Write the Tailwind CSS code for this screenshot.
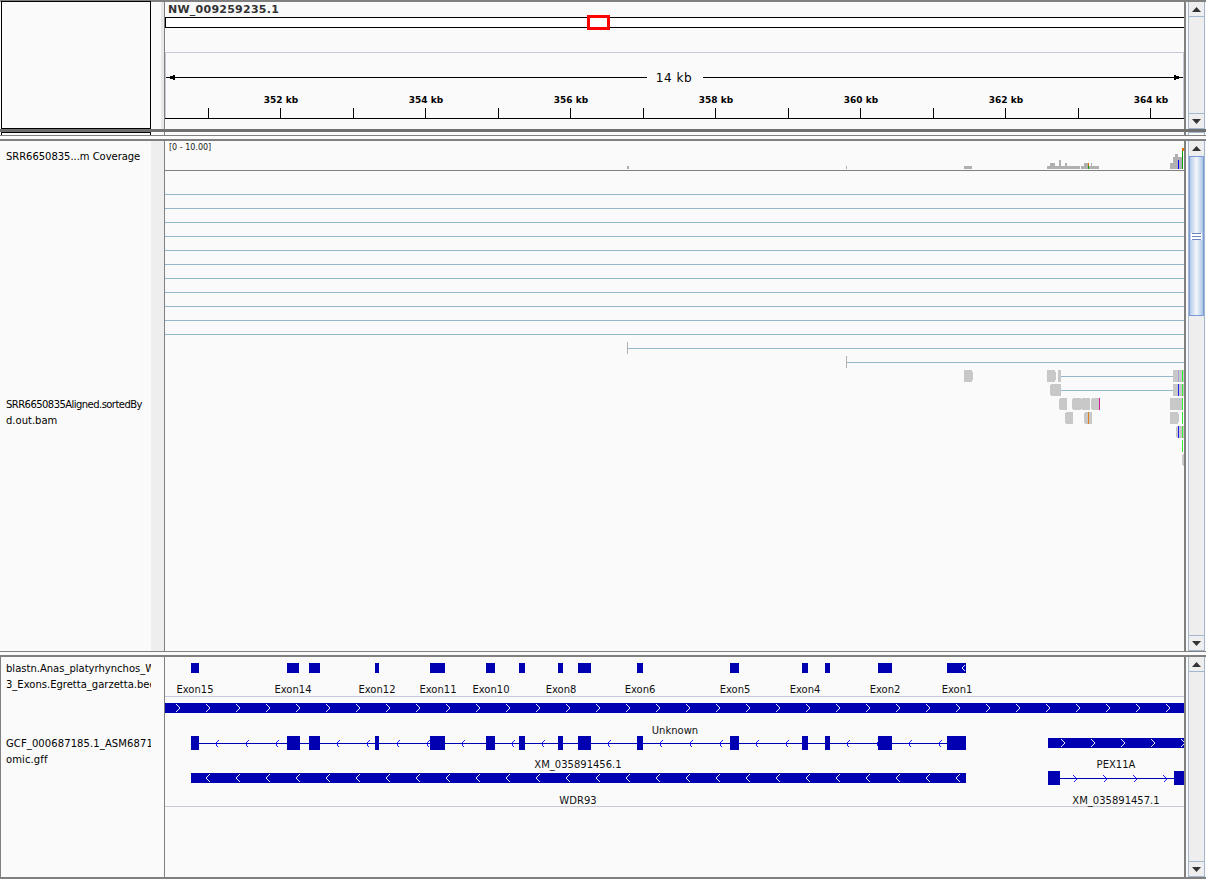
<!DOCTYPE html>
<html lang="en">
<head>
  <meta charset="UTF-8" />
  <title>IGV</title>
  <script src="https://cdn.jsdelivr.net/npm/@tailwindcss/browser@4"></script>
</head>
<body class="bg-[#fafafa] overflow-hidden">
<div class="w-[1206px] h-[879px] flex flex-col bg-[#fafafa] font-['DejaVu_Sans',sans-serif] text-[10px] text-black">

  <!-- header panel -->
  <div class="h-[129px] flex border-t-2 border-[#808080]">
    <div class="w-[151px] pl-px shrink-0"><div class="-mt-px h-[128px] border border-black bg-[#fafafa]"></div></div>
    <div class="w-[10px] shrink-0"></div>
    <div class="w-[3px] shrink-0 bg-[#e8e8e8]"></div>
    <div class="w-[1020px] shrink-0 border-l border-[#808080]">
      <svg width="1019" height="127" viewBox="165 2 1019 127" shape-rendering="crispEdges" class="block">
        <text x="168" y="13" font-size="11" font-weight="700" letter-spacing="0.25" fill="#333">NW_009259235.1</text>
        <rect x="165.5" y="17.5" width="1020" height="10" fill="#fff" stroke="#000"/>
        <rect x="588.500" y="16.500" width="20" height="12" fill="none" stroke="#f00" stroke-width="3"/>
        <rect x="165.500" y="52.500" width="1018" height="66" fill="none" stroke="#c8c8d8"/>
        <path d="M166 77.500H647M703 77.500H1183M208.500 108V118M280.500 108V118M353.500 108V118M425.500 108V118M498.500 108V118M570.500 108V118M643.500 108V118M715.500 108V118M788.500 108V118M860.500 108V118M933.500 108V118M1005.500 108V118M1078.500 108V118M1150.500 108V118" stroke="#000" fill="none"/>
        <path d="M165 118.500H1184" stroke="#000"/>
        <polygon points="168,77.500 175,74.500 175,80.500" fill="#000"/>
        <polygon points="1181,77.500 1174,74.500 1174,80.500" fill="#000"/>
        <text x="674" y="82" text-anchor="middle" font-size="12" letter-spacing="0.6" fill="#000">14 kb</text>
        <g font-size="9" font-weight="700" text-anchor="middle" fill="#000">
          <text x="281" y="103">352 kb</text>
          <text x="426" y="103">354 kb</text>
          <text x="571" y="103">356 kb</text>
          <text x="716" y="103">358 kb</text>
          <text x="861" y="103">360 kb</text>
          <text x="1006" y="103">362 kb</text>
          <text x="1151" y="103">364 kb</text>
        </g>
      </svg>
    </div>
    <div class="w-[22px] shrink-0 border-l-2 border-[#808080] pl-[2px] pr-px">
      <div class="h-full flex flex-col border-x border-[#a3b8cc] bg-[#eeeeee]">
        <div class="h-[15px] flex items-center justify-center border-b border-[#a3b8cc]">
          <svg width="9" height="5" viewBox="0 0 9 5"><polygon points="4.500,0 9,5 0,5" fill="#333"/></svg>
        </div>
        <div class="flex-1"></div>
        <div class="h-[16px] flex items-center justify-center border-y border-[#a3b8cc]">
          <svg width="9" height="5" viewBox="0 0 9 5"><polygon points="0,0 9,0 4.500,5" fill="#333"/></svg>
        </div>
      </div>
    </div>
  </div>

  <!-- divider and the hidden strip -->
  <div class="h-[3px] bg-[#707070]"></div>
  <div class="h-[4px] flex border-b border-[#808080]">
    <div class="w-[151px] pl-px shrink-0"><div class="h-[3px] border-x border-t border-black"></div></div>
    <div class="w-[13px] shrink-0"></div>
    <div class="w-[1020px] shrink-0 border-l border-[#808080]"></div>
    <div class="w-[22px] shrink-0 border-l-2 border-[#808080] pl-[2px] pr-px"><div class="h-[3px] border-x border-t border-[#a3b8cc]"></div></div>
  </div>
  <div class="h-[3px]"></div>

  <!-- alignment panel -->
  <div class="h-[513px] flex border-t-2 border-b border-[#808080]">
    <div class="w-[151px] shrink-0 pl-[6px] leading-[16px] whitespace-nowrap overflow-hidden">
      <div class="mt-[8px] h-[248px] tracking-[-0.04px]">SRR6650835...m Coverage</div>
      <div class="tracking-[-0.55px]">SRR6650835Aligned.sortedBy</div>
      <div>d.out.bam</div>
    </div>
    <div class="w-[13px] shrink-0 bg-[#eeeeee]"></div>
    <div class="w-[1020px] shrink-0 border-l border-[#808080]">
      <svg width="1019" height="510" viewBox="165 141 1019 510" shape-rendering="crispEdges" class="block">
        <text x="169" y="150" font-size="8" fill="#222">[0 - 10.00]</text>
        <path d="M165 170.500H1184" stroke="#808080"/>
        <!-- coverage -->
        <g fill="#b0b0b0">
          <rect x="627" y="166" width="2" height="3"/>
          <rect x="846" y="166" width="1" height="3"/>
          <rect x="964" y="166" width="8" height="3"/>
          <rect x="1047" y="166" width="33" height="3"/>
          <rect x="1050" y="163" width="5" height="3"/>
          <rect x="1059" y="160" width="2" height="6"/>
          <rect x="1065" y="163" width="2" height="3"/>
          <rect x="1081" y="166" width="18" height="3"/>
          <rect x="1084" y="163" width="4" height="3"/>
          <rect x="1091" y="163" width="1" height="3"/>
          <rect x="1170" y="163" width="3" height="6"/>
          <rect x="1173" y="157" width="9" height="12"/>
          <rect x="1175" y="154" width="3" height="3"/>
        </g>
        <rect x="1088" y="163" width="1" height="3" fill="#e07000"/>
        <rect x="1088" y="166" width="1" height="3" fill="#00a000"/>
        <rect x="1178" y="160" width="1" height="9" fill="#0000ff"/>
        <rect x="1182" y="151" width="1" height="18" fill="#00a000"/>
        <rect x="1182" y="148" width="2" height="3" fill="#e07000"/>
        <!-- spliced reads -->
        <path d="M165 194.500H1184M165 208.500H1184M165 222.500H1184M165 236.500H1184M165 250.500H1184M165 264.500H1184M165 278.500H1184M165 292.500H1184M165 306.500H1184M165 320.500H1184M165 334.500H1184M628 348.500H1184M847 362.500H1184M1060 376.500H1173M1060 390.500H1173" stroke="#93b8cc"/>
        <g fill="#c8c8c8">
          <rect x="627" y="342" width="1" height="12" fill="#b0b0b0"/>
          <rect x="846" y="356" width="1" height="12" fill="#b0b0b0"/>
          <path d="M964 370h8l1 3v6l-1 3h-8z"/>
          <path d="M1047 370h8l1 3v6l-1 3h-8z"/>
          <rect x="1058" y="370" width="3" height="12"/>
          <rect x="1173" y="370" width="11" height="12"/>
          <path d="M1051 384h10v12h-10l-1-3v-6z"/>
          <rect x="1173" y="384" width="11" height="12"/>
          <path d="M1060 398h7v12h-7l-1-3v-6z"/>
          <path d="M1073 398h8v12h-8l-1-3v-6z"/>
          <path d="M1082 398h8v12h-8l-1-3v-6z"/>
          <path d="M1092 398h7v12h-7l-1-3v-6z"/>
          <rect x="1170" y="398" width="13" height="12"/>
          <path d="M1066 412h7v12h-7l-1-3v-6z"/>
          <path d="M1085 412h7v12h-7l-1-3v-6z"/>
          <path d="M1170 412h8l1 3v6l-1 3h-8z"/>
          <path d="M1177 426h7v12h-7l-1-3v-6z"/>
          <path d="M1183 454h1v12h-1l-1-3v-6z"/>
        </g>
        <rect x="1178" y="370" width="1" height="12" fill="#a8a0d0"/>
        <rect x="1182" y="370" width="1" height="12" fill="#30f030"/>
        <rect x="1178" y="384" width="1" height="12" fill="#2020f0"/>
        <rect x="1182" y="384" width="1" height="12" fill="#30f030"/>
        <rect x="1099" y="398" width="1" height="12" fill="#d02090"/>
        <rect x="1182" y="398" width="1" height="12" fill="#30f030"/>
        <rect x="1088" y="412" width="1" height="12" fill="#e08020"/>
        <rect x="1182" y="412" width="1" height="12" fill="#30f030"/>
        <rect x="1178" y="426" width="1" height="12" fill="#2020f0"/>
        <rect x="1182" y="426" width="1" height="12" fill="#30f030"/>
        <rect x="1182" y="440" width="1" height="12" fill="#30f030"/>
      </svg>
    </div>
    <div class="w-[22px] shrink-0 border-l-2 border-[#808080] pl-[2px] pr-px">
      <div class="h-full flex flex-col border-x border-[#a3b8cc] bg-[#eeeeee]">
        <div class="h-[15px] flex items-center justify-center">
          <svg width="9" height="5" viewBox="0 0 9 5"><polygon points="4.500,0 9,5 0,5" fill="#333"/></svg>
        </div>
        <div class="h-[160px] flex items-center justify-center border border-[#7a9ad8] bg-linear-to-r from-[#b4cbe8] via-[#f4f7fb] to-[#a9c4e6]">
          <div class="w-[11px] h-[7px] bg-white flex flex-col justify-between px-px">
            <div class="h-px bg-[#6a85c0]"></div><div class="h-px bg-[#6a85c0]"></div><div class="h-px bg-[#6a85c0]"></div>
          </div>
        </div>
        <div class="flex-1"></div>
        <div class="h-[16px] flex items-center justify-center border-y border-[#a3b8cc]">
          <svg width="9" height="5" viewBox="0 0 9 5"><polygon points="0,0 9,0 4.500,5" fill="#333"/></svg>
        </div>
      </div>
    </div>
  </div>
  <div class="h-[3px]"></div>

  <!-- feature panel -->
  <div class="h-[224px] flex border-t-2 border-b-2 border-l border-[#808080]">
    <div class="w-[150px] shrink-0 pl-[5px] leading-[16px] whitespace-nowrap overflow-hidden">
      <div class="mt-[4px] h-[59px]">blastn.Anas_platyrhynchos_WI<br>3_Exons.Egretta_garzetta.bed</div>
      <div class="mt-[16px] tracking-[0.1px]">GCF_000687185.1_ASM687185v1_genomic<br>omic.gff</div>
    </div>
    <div class="w-[13px] shrink-0"></div>
    <div class="w-[1020px] shrink-0 border-l border-[#808080]">
      <svg width="1019" height="220" viewBox="165 657 1019 220" shape-rendering="crispEdges" class="block">
        <defs>
          <pattern id="chev-top" patternUnits="userSpaceOnUse" x="175" y="703" width="30" height="10">
            <path d="M1 1.500l4 3.500-4 3.500" fill="none" stroke="#fff" stroke-width="0.9"/>
          </pattern>
          <pattern id="chev-wdr" patternUnits="userSpaceOnUse" x="205" y="773" width="30" height="10">
            <path d="M5 1.500l-4 3.500 4 3.500" fill="none" stroke="#fff" stroke-width="0.9"/>
          </pattern>
          <pattern id="chev-pex" patternUnits="userSpaceOnUse" x="1060" y="738" width="30" height="10">
            <path d="M1 1.500l4 3.500-4 3.500" fill="none" stroke="#fff" stroke-width="0.9"/>
          </pattern>
        </defs>
        <!-- blast exons -->
        <g fill="#0000b2">
          <rect x="191" y="663" width="8" height="10"/>
          <rect x="287" y="663" width="12" height="10"/>
          <rect x="309" y="663" width="11" height="10"/>
          <rect x="375" y="663" width="4" height="10"/>
          <rect x="430" y="663" width="15" height="10"/>
          <rect x="486" y="663" width="9" height="10"/>
          <rect x="519" y="663" width="6" height="10"/>
          <rect x="558" y="663" width="5" height="10"/>
          <rect x="578" y="663" width="13" height="10"/>
          <rect x="637" y="663" width="6" height="10"/>
          <rect x="730" y="663" width="9" height="10"/>
          <rect x="802" y="663" width="6" height="10"/>
          <rect x="825" y="663" width="5" height="10"/>
          <rect x="878" y="663" width="14" height="10"/>
          <rect x="947" y="663" width="19" height="10"/>
        </g>
        <path d="M965 665l-3 3 3 3" fill="none" stroke="#fff" stroke-width="0.9"/>
        <g text-anchor="middle" fill="#111">
          <text x="195" y="693">Exon15</text>
          <text x="293" y="693">Exon14</text>
          <text x="377" y="693">Exon12</text>
          <text x="438" y="693">Exon11</text>
          <text x="491" y="693">Exon10</text>
          <text x="561" y="693">Exon8</text>
          <text x="640" y="693">Exon6</text>
          <text x="735" y="693">Exon5</text>
          <text x="805" y="693">Exon4</text>
          <text x="885" y="693">Exon2</text>
          <text x="957" y="693">Exon1</text>
        </g>
        <path d="M165 696.500H1184M165 806.500H1184" stroke="#c8c8d8"/>
        <rect x="165" y="703" width="1019" height="10" fill="#0000b2"/>
        <rect x="165" y="703" width="1019" height="10" fill="url(#chev-top)"/>
        <!-- XM_035891456.1 -->
        <path d="M191 743.500H966" stroke="#0000b2"/>
        <path d="M219 740l-3 3.500 3 3.500M249 740l-3 3.500 3 3.500M279 740l-3 3.500 3 3.500M340 740l-3 3.500 3 3.500M370 740l-3 3.500 3 3.500M400 740l-3 3.500 3 3.500M430 740l-3 3.500 3 3.500M465 740l-3 3.500 3 3.500M515 740l-3 3.500 3 3.500M545 740l-3 3.500 3 3.500M611 740l-3 3.500 3 3.500M663 740l-3 3.500 3 3.500M693 740l-3 3.500 3 3.500M723 740l-3 3.500 3 3.500M759 740l-3 3.500 3 3.500M789 740l-3 3.500 3 3.500M850 740l-3 3.500 3 3.500M880 740l-3 3.500 3 3.500M912 740l-3 3.500 3 3.500M942 740l-3 3.500 3 3.500" fill="none" stroke="#0000ff" stroke-width="0.9"/>
        <g fill="#0000b2">
          <rect x="191" y="736" width="8" height="14"/>
          <rect x="287" y="736" width="13" height="14"/>
          <rect x="309" y="736" width="11" height="14"/>
          <rect x="375" y="736" width="4" height="14"/>
          <rect x="430" y="736" width="15" height="14"/>
          <rect x="486" y="736" width="9" height="14"/>
          <rect x="519" y="736" width="6" height="14"/>
          <rect x="558" y="736" width="5" height="14"/>
          <rect x="578" y="736" width="13" height="14"/>
          <rect x="637" y="736" width="6" height="14"/>
          <rect x="730" y="736" width="9" height="14"/>
          <rect x="802" y="736" width="6" height="14"/>
          <rect x="825" y="736" width="5" height="14"/>
          <rect x="878" y="736" width="14" height="14"/>
          <rect x="947" y="736" width="19" height="14"/>
        </g>
        <rect x="191" y="773" width="775" height="10" fill="#0000b2"/>
        <rect x="191" y="773" width="775" height="10" fill="url(#chev-wdr)"/>
        <!-- PEX11A -->
        <rect x="1048" y="738" width="136" height="10" fill="#0000b2"/>
        <rect x="1048" y="738" width="136" height="10" fill="url(#chev-pex)"/>
        <path d="M1048 778.500H1184" stroke="#0000b2"/>
        <path d="M1073 775l3 3.500-3 3.500M1103 775l3 3.500-3 3.500M1133 775l3 3.500-3 3.500M1163 775l3 3.500-3 3.500" fill="none" stroke="#0000ff" stroke-width="0.9"/>
        <rect x="1048" y="771" width="12" height="14" fill="#0000b2"/>
        <rect x="1174" y="771" width="10" height="14" fill="#0000b2"/>
        <g text-anchor="middle" fill="#111">
          <text x="675" y="734">Unknown</text>
          <text x="578" y="768">XM_035891456.1</text>
          <text x="578" y="804">WDR93</text>
          <text x="1116" y="768">PEX11A</text>
          <text x="1116" y="804">XM_035891457.1</text>
        </g>
      </svg>
    </div>
    <div class="w-[22px] shrink-0 border-l-2 border-[#808080] pl-[2px] pr-px">
      <div class="h-full flex flex-col border-x border-[#a3b8cc] bg-[#eeeeee]">
        <div class="h-[15px] flex items-center justify-center border-b border-[#a3b8cc]">
          <svg width="9" height="5" viewBox="0 0 9 5"><polygon points="4.500,0 9,5 0,5" fill="#333"/></svg>
        </div>
        <div class="flex-1"></div>
        <div class="h-[16px] flex items-center justify-center border-y border-[#a3b8cc]">
          <svg width="9" height="5" viewBox="0 0 9 5"><polygon points="0,0 9,0 4.500,5" fill="#333"/></svg>
        </div>
      </div>
    </div>
  </div>

</div>
</body>
</html>
